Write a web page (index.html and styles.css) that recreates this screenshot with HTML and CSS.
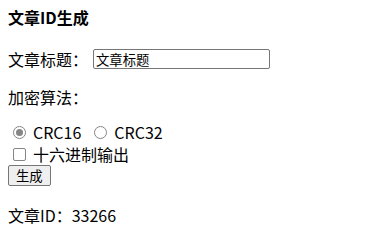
FILE: index.html
```html
<!DOCTYPE html>
<html lang="zh-CN">
<head>
  <meta charset="UTF-8" />
  <title>文章ID生成</title>
  <meta name="viewport" content="width=device-width, initial-scale=1.0" />
  <link rel="stylesheet" href="styles.css">
</head>
<body>

<div class="page">
  <h4 class="title">文章ID生成</h4>

  <div class="row field">
    <label for="articleTitle">文章标题：</label>
    <input id="articleTitle" type="text" value="文章标题">
  </div>

  <div class="row algo">加密算法：</div>

  <div class="row radios">
    <label><input type="radio" name="algo" value="crc16" checked> CRC16</label>
    <label><input type="radio" name="algo" value="crc32"> CRC32</label>
  </div>

  <div class="row check">
    <label><input type="checkbox" id="hexOut"> 十六进制输出</label>
  </div>

  <button class="gen">生成</button>

  <div class="row result">文章ID：<span id="resultId">33266</span></div>
</div>

</body>
</html>
```

FILE: styles.css
```css
* {
  box-sizing: border-box;
  margin: 0;
  padding: 0;
}

html, body {
  background: #ffffff;
  color: #000000;
  font-family: "Noto Sans CJK SC", "Noto Sans", sans-serif;
  font-size: 16px;
}

.page {
  padding: 6px 8px;
}

.title {
  font-size: 16px;
  font-weight: bold;
  line-height: 22px;
}

.row {
  display: flex;
  align-items: center;
  height: 22px;
  line-height: 22px;
}

.field {
  margin-top: 20px;
}

.field label {
  width: 85px;
}

.field input {
  width: 177px;
  height: 20px;
  border: 1px solid #767676;
  border-radius: 2px;
  padding: 0 2px;
  font-family: "Noto Sans CJK SC", sans-serif;
  font-size: 13.33px;
  color: #000;
}

.algo {
  margin-top: 16px;
}

.radios {
  margin-top: 13px;
  gap: 8px;
}

.radios label, .check label {
  display: flex;
  align-items: center;
}

input[type="radio"], input[type="checkbox"] {
  appearance: none;
  width: 13px;
  height: 13px;
  margin: 0 7px 0 5px;
  border: 1px solid #858585;
  background: #fff;
}

input[type="radio"] {
  border-radius: 50%;
  display: grid;
  place-items: center;
}

input[type="radio"]:checked::after {
  content: "";
  width: 7px;
  height: 7px;
  border-radius: 50%;
  background: #858585;
}

input[type="checkbox"] {
  border-radius: 2px;
}

.gen {
  display: block;
  height: 21px;
  padding: 0 7px;
  border: 1px solid #767676;
  border-radius: 2px;
  background: #efefef;
  font-family: "Noto Sans CJK SC", sans-serif;
  font-size: 13.33px;
  line-height: 19px;
  color: #000;
}

.result {
  margin-top: 18px;
}
```
